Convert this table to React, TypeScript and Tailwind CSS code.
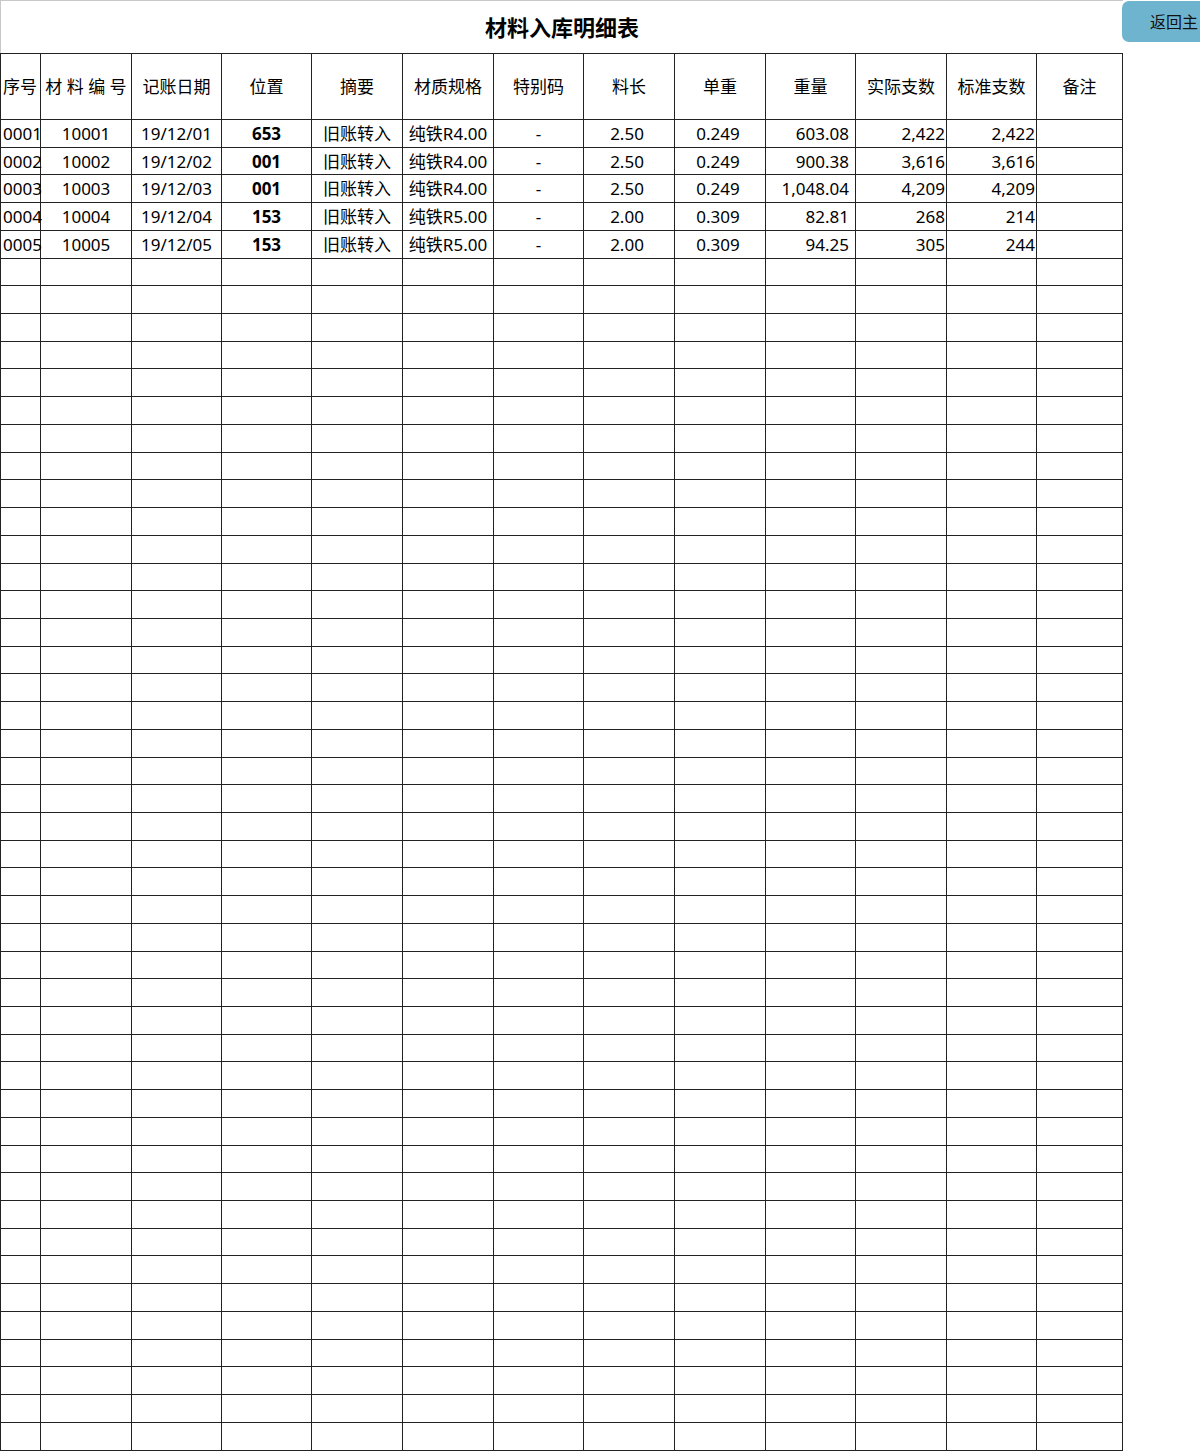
import React from "react";

const headers = ["序号", "材 料 编 号", "记账日期", "位置", "摘要", "材质规格", "特别码", "料长", "单重", "重量", "实际支数", "标准支数", "备注"];

const data: string[][] = [
  ["0001", "10001", "19/12/01", "653", "旧账转入", "纯铁R4.00", "-", "2.50", "0.249", "603.08", "2,422", "2,422", ""],
  ["0002", "10002", "19/12/02", "001", "旧账转入", "纯铁R4.00", "-", "2.50", "0.249", "900.38", "3,616", "3,616", ""],
  ["0003", "10003", "19/12/03", "001", "旧账转入", "纯铁R4.00", "-", "2.50", "0.249", "1,048.04", "4,209", "4,209", ""],
  ["0004", "10004", "19/12/04", "153", "旧账转入", "纯铁R5.00", "-", "2.00", "0.309", "82.81", "268", "214", ""],
  ["0005", "10005", "19/12/05", "153", "旧账转入", "纯铁R5.00", "-", "2.00", "0.309", "94.25", "305", "244", ""],
];

const TOTAL_ROWS = 48;

const cellAlign = (c: number) => {
  if (c === 0) return "justify-start pl-[2px] text-[13px]";
  if (c === 9) return "justify-end pr-[6px]";
  if (c === 10 || c === 11) return "justify-end pr-[1px]";
  if (c === 3) return "justify-center font-bold";
  if (c === 7 || c === 8) return "justify-center pr-[4px]";
  return "justify-center";
};

export default function App() {
  const rows: string[][] = [];
  for (let i = 0; i < TOTAL_ROWS; i++) {
    rows.push(data[i] ?? Array(13).fill(""));
  }
  return (
    <div
      className="relative w-[1200px] h-[1451px] overflow-hidden bg-white text-black"
      style={{ fontFamily: '"Noto Sans", "Noto Sans CJK SC", sans-serif' }}
    >
      <div className="h-[53px] w-[1123px] border-t border-l border-[#c8c8c8] flex items-center justify-center">
        <span className="text-[22px] font-bold leading-none">材料入库明细表</span>
      </div>
      <div className="grid w-[1123px] grid-cols-[40px_91px_90px_90px_91px_91px_90px_91px_91px_90px_91px_90px_86px] grid-rows-[66px_repeat(48,27.73px)] border-t border-l border-[#222]">
        {headers.map((h, i) => (
          <div
            key={"h" + i}
            className={`flex items-center border-r border-b border-[#222] text-[17px] whitespace-pre ${
              i === 0 ? "justify-start pl-[2px]" : "justify-center"
            }`}
          >
            {h}
          </div>
        ))}
        {rows.map((r, ri) =>
          r.map((v, ci) => (
            <div
              key={ri + "-" + ci}
              className={`flex items-center border-r border-b border-[#222] text-[17px] leading-none whitespace-nowrap ${cellAlign(ci)}`}
            >
              {v}
            </div>
          ))
        )}
      </div>
      <div className="absolute left-[1122px] top-[1px] w-[110px] h-[41px] rounded-[7px] bg-[#6fb4cf] flex items-center pl-[28px] text-[16px] text-[#111] whitespace-nowrap">
        返回主
      </div>
    </div>
  );
}
